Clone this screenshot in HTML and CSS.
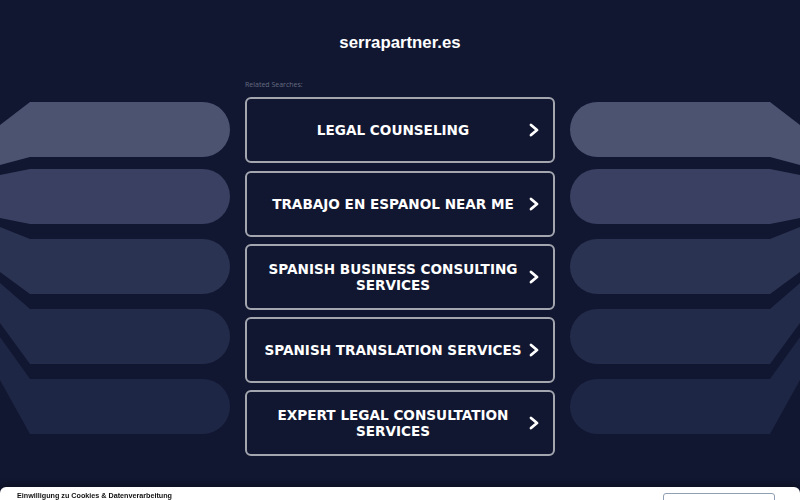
FILE: index.html
```html
<!DOCTYPE html>
<html>
<head>
	<title>serrapartner.es</title>
	<link rel="stylesheet" href="styles.css">
</head>
<body>
	<div class="page">
		<h1 class="site-title">serrapartner.es</h1>
		<div class="stage">
			<svg class="deco" viewBox="0 77 230 400" width="230" height="400">
				<g class="ribbons">
					<path class="r1" d="M0 125 L30 102 L202.5 102 A27.5 27.5 0 0 1 202.5 157 L30 157 L0 165 Z"/>
					<path class="r2" d="M0 175 L30 169 L202.5 169 A27.5 27.5 0 0 1 202.5 224 L30 224 L0 218 Z"/>
					<path class="r3" d="M0 227 L30 239 L202.5 239 A27.5 27.5 0 0 1 202.5 294 L30 294 L0 272 Z"/>
					<path class="r4" d="M0 283 L30 309 L202.5 309 A27.5 27.5 0 0 1 202.5 364 L30 364 L0 323 Z"/>
					<path class="r5" d="M0 337 L30 379 L202.5 379 A27.5 27.5 0 0 1 202.5 434 L30 434 L0 380 Z"/>
				</g>
			</svg>

			<main class="searches">
				<p class="caption">Related Searches:</p>
				<a class="search-link" href="#"><span>LEGAL COUNSELING</span><svg class="chevron" viewBox="0 0 12 14" width="12" height="14"><polyline points="3,2 9,7 3,12"/></svg></a>
				<a class="search-link" href="#"><span>TRABAJO EN ESPANOL NEAR ME</span><svg class="chevron" viewBox="0 0 12 14" width="12" height="14"><polyline points="3,2 9,7 3,12"/></svg></a>
				<a class="search-link" href="#"><span>SPANISH BUSINESS CONSULTING SERVICES</span><svg class="chevron" viewBox="0 0 12 14" width="12" height="14"><polyline points="3,2 9,7 3,12"/></svg></a>
				<a class="search-link" href="#"><span>SPANISH TRANSLATION SERVICES</span><svg class="chevron" viewBox="0 0 12 14" width="12" height="14"><polyline points="3,2 9,7 3,12"/></svg></a>
				<a class="search-link" href="#"><span>EXPERT LEGAL CONSULTATION SERVICES</span><svg class="chevron" viewBox="0 0 12 14" width="12" height="14"><polyline points="3,2 9,7 3,12"/></svg></a>
			</main>

			<svg class="deco" viewBox="0 77 230 400" width="230" height="400">
				<g class="ribbons" transform="translate(230 0) scale(-1 1)">
					<path class="r1" d="M0 125 L30 102 L202.5 102 A27.5 27.5 0 0 1 202.5 157 L30 157 L0 165 Z"/>
					<path class="r2" d="M0 175 L30 169 L202.5 169 A27.5 27.5 0 0 1 202.5 224 L30 224 L0 218 Z"/>
					<path class="r3" d="M0 227 L30 239 L202.5 239 A27.5 27.5 0 0 1 202.5 294 L30 294 L0 272 Z"/>
					<path class="r4" d="M0 283 L30 309 L202.5 309 A27.5 27.5 0 0 1 202.5 364 L30 364 L0 323 Z"/>
					<path class="r5" d="M0 337 L30 379 L202.5 379 A27.5 27.5 0 0 1 202.5 434 L30 434 L0 380 Z"/>
				</g>
			</svg>
		</div>
	</div>

	<div class="consent">
		<p class="consent-title">Einwilligung zu Cookies &amp; Datenverarbeitung</p>
		<button class="consent-accept">&#10003; Alle akzeptieren</button>
	</div>
</body>
</html>
```

FILE: styles.css
```css
html, body {
	margin: 0;
	background: #111731;
	color: #fff;
	font-family: "Liberation Sans", Arial, sans-serif;
}

body {
	overflow: hidden;
	height: 500px;
}

.site-title {
	margin: 0;
	padding-top: 33px;
	text-align: center;
	font-size: 16.8px;
	line-height: 20px;
	font-weight: bold;
}

.stage {
	display: grid;
	grid-template-columns: 230px 310px 230px;
	column-gap: 15px;
	margin-top: 24px;
}

.deco {
	display: block;
}

.ribbons .r1 { fill: #4b5371; }
.ribbons .r2 { fill: #394061; }
.ribbons .r3 { fill: #2b3352; }
.ribbons .r4 { fill: #232b4a; }
.ribbons .r5 { fill: #1e2645; }

.searches {
	display: flex;
	flex-direction: column;
	gap: 7.3px;
}

.caption {
	margin: 3px 0 0;
	font-family: "Open Sans", sans-serif;
	font-size: 7px;
	line-height: 10px;
	color: #666c80;
}

.search-link {
	display: flex;
	align-items: center;
	height: 66px;
	box-sizing: border-box;
	border: 2px solid #a3a6ae;
	border-radius: 6px;
	padding: 0 13px 0 14px;
	color: #fff;
	text-decoration: none;
	font-family: "DejaVu Sans", Verdana, sans-serif;
	font-weight: bold;
	font-size: 13.6px;
	line-height: 16px;
}

.search-link span {
	flex: 1;
	text-align: center;
}

.chevron {
	flex-shrink: 0;
	margin-left: 3px;
}

.chevron polyline {
	fill: none;
	stroke: #fff;
	stroke-width: 2.8;
	stroke-linecap: round;
	stroke-linejoin: round;
}

.consent {
	position: fixed;
	left: 0;
	right: 0;
	top: 487px;
	height: 60px;
	display: flex;
	justify-content: space-between;
	align-items: flex-start;
	padding: 4px 25px 0 17px;
	background: #fff;
	border-radius: 6px 6px 0 0;
	box-shadow: 0 -2px 6px rgba(0, 0, 0, 0.35);
}

.consent-title {
	margin: 0;
	color: #111;
	font-size: 7.2px;
	line-height: 10px;
	font-weight: bold;
}

.consent-accept {
	width: 112px;
	height: 22px;
	margin-top: 2px;
	border: 1px solid #8fa0b5;
	border-radius: 3px;
	background: #fff;
	color: #5d6f88;
	font-family: "Liberation Sans", Arial, sans-serif;
	font-size: 8px;
	line-height: 10px;
	padding: 0;
	text-align: center;
	vertical-align: top;
}
```
